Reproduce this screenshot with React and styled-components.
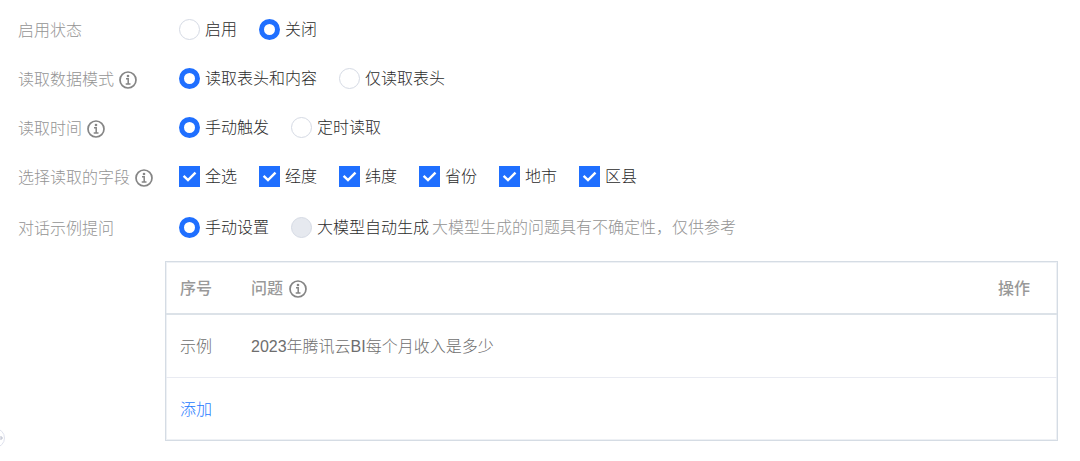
import React, { useState } from "react";
import styled, { createGlobalStyle } from "styled-components";

const GlobalStyle = createGlobalStyle`
  * {
    box-sizing: border-box;
  }

  body {
    margin: 0;
    background: #fff;
    overflow-x: hidden;
    font-family: "Liberation Sans", "Noto Sans CJK SC", sans-serif;
    font-size: 16px;
    font-weight: 300;
    line-height: 22px;
    color: #2b2b2b;
  }
`;

const Page = styled.form`
  position: relative;
  padding: 16px 22px 20px 18px;
`;

const Fields = styled.div`
  display: flex;
  flex-direction: column;
  gap: 25px;
`;

const Row = styled.div`
  display: grid;
  grid-template-columns: 161px 1fr;
  align-items: center;
  height: ${(props) => (props.$tall ? "26px" : "24px")};
`;

const Label = styled.div`
  display: flex;
  align-items: center;
  gap: 5px;
  padding-top: 4px;
  color: #949494;
`;

const Options = styled.div`
  display: flex;
  align-items: center;
  gap: 22px;
`;

const Option = styled.label`
  display: flex;
  align-items: center;
  gap: 5px;
  white-space: nowrap;
`;

const OptionText = styled.span`
  padding-top: 2px;
`;

const Radio = styled.input`
  appearance: none;
  flex: none;
  width: 21px;
  height: 21px;
  margin: 0;
  border: 1px solid #d5dae4;
  border-radius: 50%;
  background: #fff;

  &:checked {
    border: 5px solid #1f6fff;
  }

  &:disabled {
    background: #e6e9ef;
  }
`;

const CheckBox = styled.span`
  display: grid;
  width: 21px;
  height: 21px;

  input,
  svg {
    grid-area: 1 / 1;
    width: 21px;
    height: 21px;
  }

  input {
    appearance: none;
    margin: 0;
    border: 1px solid #d5dae4;
    background: #fff;
  }

  input:checked {
    border-color: #1f6fff;
    background: #1f6fff;
  }

  svg {
    pointer-events: none;
  }
`;

const Hint = styled.span`
  margin-left: -19px;
  padding-top: 2px;
  color: #949494;
  white-space: nowrap;
`;

const TableBox = styled.div`
  margin: 21px 0 0 147px;
  border: 1px solid #d5dce4;
  box-shadow: inset 0 0 0 1px #eef1f5;
`;

const Table = styled.table`
  width: 100%;
  border-collapse: collapse;
  text-align: left;
  color: #6e6e6e;

  th {
    height: 52px;
    padding: 2px 14px 0;
    border-bottom: 2px solid #dce2e8;
    font-weight: 500;
    color: #999;
  }

  td {
    height: 63px;
    padding: 2px 14px 0;
  }

  tbody tr + tr td {
    border-top: 1px solid #e9ebf2;
  }

  th:first-child {
    width: 71px;
  }

  th:last-child {
    width: 73px;
  }
`;

const HeadCell = styled.span`
  display: flex;
  align-items: center;
  gap: 6px;
`;

const AddButton = styled.button`
  padding: 0;
  border: 0;
  background: none;
  font: inherit;
  color: #1f7bff;
  cursor: pointer;
`;

const Handle = styled.button`
  position: absolute;
  left: -15px;
  bottom: 13px;
  width: 20px;
  height: 20px;
  padding: 0;
  border: 1px solid #dfe2ee;
  border-radius: 50%;
  background: #fff;

  svg {
    display: block;
  }
`;

const InfoIcon = () => (
  <svg width="18" height="18" viewBox="0 0 18 18" fill="none" stroke="#858585">
    <circle cx="9" cy="9" r="8" strokeWidth="1.7" />
    <path d="M7 7.7h2.2v5M6.7 12.9h4.8" strokeWidth="1.5" />
    <circle cx="9" cy="5" r="1.3" fill="#858585" stroke="none" />
  </svg>
);

const RadioGroup = ({ name, options, children }) => {
  const [value, setValue] = useState(options.find((o) => o.checked).text);

  return (
    <Options role="radiogroup" aria-labelledby={name}>
      {options.map((o) => (
        <Option key={o.text}>
          <Radio
            type="radio"
            name={name}
            checked={value === o.text}
            disabled={o.disabled}
            onChange={() => setValue(o.text)}
          />
          <OptionText>{o.text}</OptionText>
        </Option>
      ))}
      {children}
    </Options>
  );
};

const fieldNames = ["经度", "纬度", "省份", "地市", "区县"];

const FieldPicker = () => {
  const [picked, setPicked] = useState(fieldNames);
  const all = picked.length === fieldNames.length;

  const toggle = (name) => {
    if (name === "全选") {
      return setPicked(all ? [] : fieldNames);
    }
    setPicked(picked.includes(name) ? picked.filter((n) => n !== name) : [...picked, name]);
  };

  return (
    <Options role="group" aria-labelledby="fields">
      {["全选", ...fieldNames].map((name) => (
        <Option key={name}>
          <CheckBox>
            <input
              type="checkbox"
              checked={name === "全选" ? all : picked.includes(name)}
              onChange={() => toggle(name)}
            />
            <svg viewBox="0 0 21 21" fill="none" stroke="#fff" strokeWidth="2.4">
              <path d="M4.6 9.8l4.4 4.3 7.5-7.5" />
            </svg>
          </CheckBox>
          <OptionText>{name}</OptionText>
        </Option>
      ))}
    </Options>
  );
};

export default function App() {
  return (
    <>
      <GlobalStyle />
      <Page>
        <Fields>
          <Row>
            <Label id="status">启用状态</Label>
            <RadioGroup name="status" options={[{ text: "启用" }, { text: "关闭", checked: true }]} />
          </Row>
          <Row>
            <Label id="mode">读取数据模式<InfoIcon /></Label>
            <RadioGroup
              name="mode"
              options={[{ text: "读取表头和内容", checked: true }, { text: "仅读取表头" }]}
            />
          </Row>
          <Row>
            <Label id="time">读取时间<InfoIcon /></Label>
            <RadioGroup name="time" options={[{ text: "手动触发", checked: true }, { text: "定时读取" }]} />
          </Row>
          <Row $tall>
            <Label id="fields">选择读取的字段<InfoIcon /></Label>
            <FieldPicker />
          </Row>
          <Row $tall>
            <Label id="sample">对话示例提问</Label>
            <RadioGroup
              name="sample"
              options={[{ text: "手动设置", checked: true }, { text: "大模型自动生成", disabled: true }]}
            >
              <Hint>大模型生成的问题具有不确定性，仅供参考</Hint>
            </RadioGroup>
          </Row>
        </Fields>
        <TableBox>
          <Table>
            <thead>
              <tr>
                <th>序号</th>
                <th><HeadCell>问题<InfoIcon /></HeadCell></th>
                <th>操作</th>
              </tr>
            </thead>
            <tbody>
              <tr>
                <td>示例</td>
                <td>2023年腾讯云BI每个月收入是多少</td>
                <td></td>
              </tr>
              <tr>
                <td colSpan="3"><AddButton type="button">添加</AddButton></td>
              </tr>
            </tbody>
          </Table>
        </TableBox>
        <Handle type="button" aria-label="展开">
          <svg width="18" height="18" viewBox="0 0 18 18" fill="none" stroke="#b9bdcc">
            <path d="M12 9h4M14.5 7l2 2-2 2" />
          </svg>
        </Handle>
      </Page>
    </>
  );
}
